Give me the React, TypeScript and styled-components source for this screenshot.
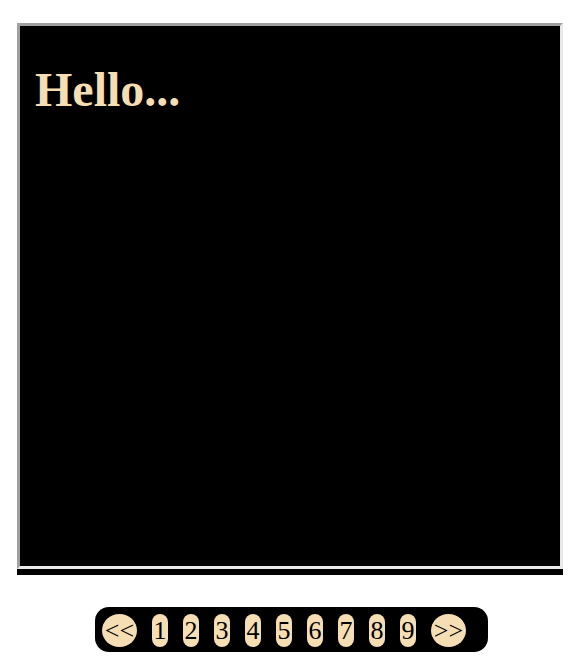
import React from "react";
import styled, { createGlobalStyle } from "styled-components";

const Global = createGlobalStyle`
  body {
    margin: 8px;
    background: #ffffff;
    font-family: "Liberation Serif", "Times New Roman", serif;
  }
`;

const Page = styled.div`
  display: flex;
  flex-direction: column;
  align-items: flex-start;
  padding: 15px 0 0 9px;
`;

const Frame = styled.div`
  width: 546px;
  border-bottom: 6px solid #000;
`;

const Screen = styled.div`
  box-sizing: border-box;
  width: 546px;
  height: 546px;
  background: #000;
  border-style: solid;
  border-width: 3px;
  border-color: #a0a0a0 #e9e9e9 #e9e9e9 #a0a0a0;
  padding: 1px 15px;
`;

const Title = styled.h1`
  margin: 35px 0 0;
  font-family: "Liberation Serif", "Times New Roman", serif;
  font-size: 48px;
  font-weight: bold;
  line-height: normal;
  color: #f5deb3;
`;

const Pager = styled.nav`
  box-sizing: border-box;
  margin: 32px 0 0 78px;
  height: 45px;
  display: flex;
  align-items: center;
  gap: 15px;
  padding: 0 22px 0 7px;
  background: #000;
  border-radius: 14px;
`;

const PageButton = styled.button<{ $wide?: boolean }>`
  box-sizing: border-box;
  width: ${(p) => (p.$wide ? "35px" : "16px")};
  height: 33px;
  margin-top: 2px;
  padding: 0;
  border: none;
  border-radius: ${(p) => (p.$wide ? "50%" : "9px")};
  background: #f5deb3;
  color: #000;
  font-family: "Liberation Serif", "Times New Roman", serif;
  font-size: 26px;
  line-height: 34px;
  text-align: center;
  white-space: nowrap;
  overflow: visible;
  cursor: pointer;
`;

export default function App() {
  const pages = [1, 2, 3, 4, 5, 6, 7, 8, 9];
  return (
    <>
      <Global />
      <Page>
        <Frame>
          <Screen>
            <Title>Hello...</Title>
          </Screen>
        </Frame>
        <Pager>
          <PageButton $wide>&lt;&lt;</PageButton>
          {pages.map((n) => (
            <PageButton key={n}>{n}</PageButton>
          ))}
          <PageButton $wide>&gt;&gt;</PageButton>
        </Pager>
      </Page>
    </>
  );
}
